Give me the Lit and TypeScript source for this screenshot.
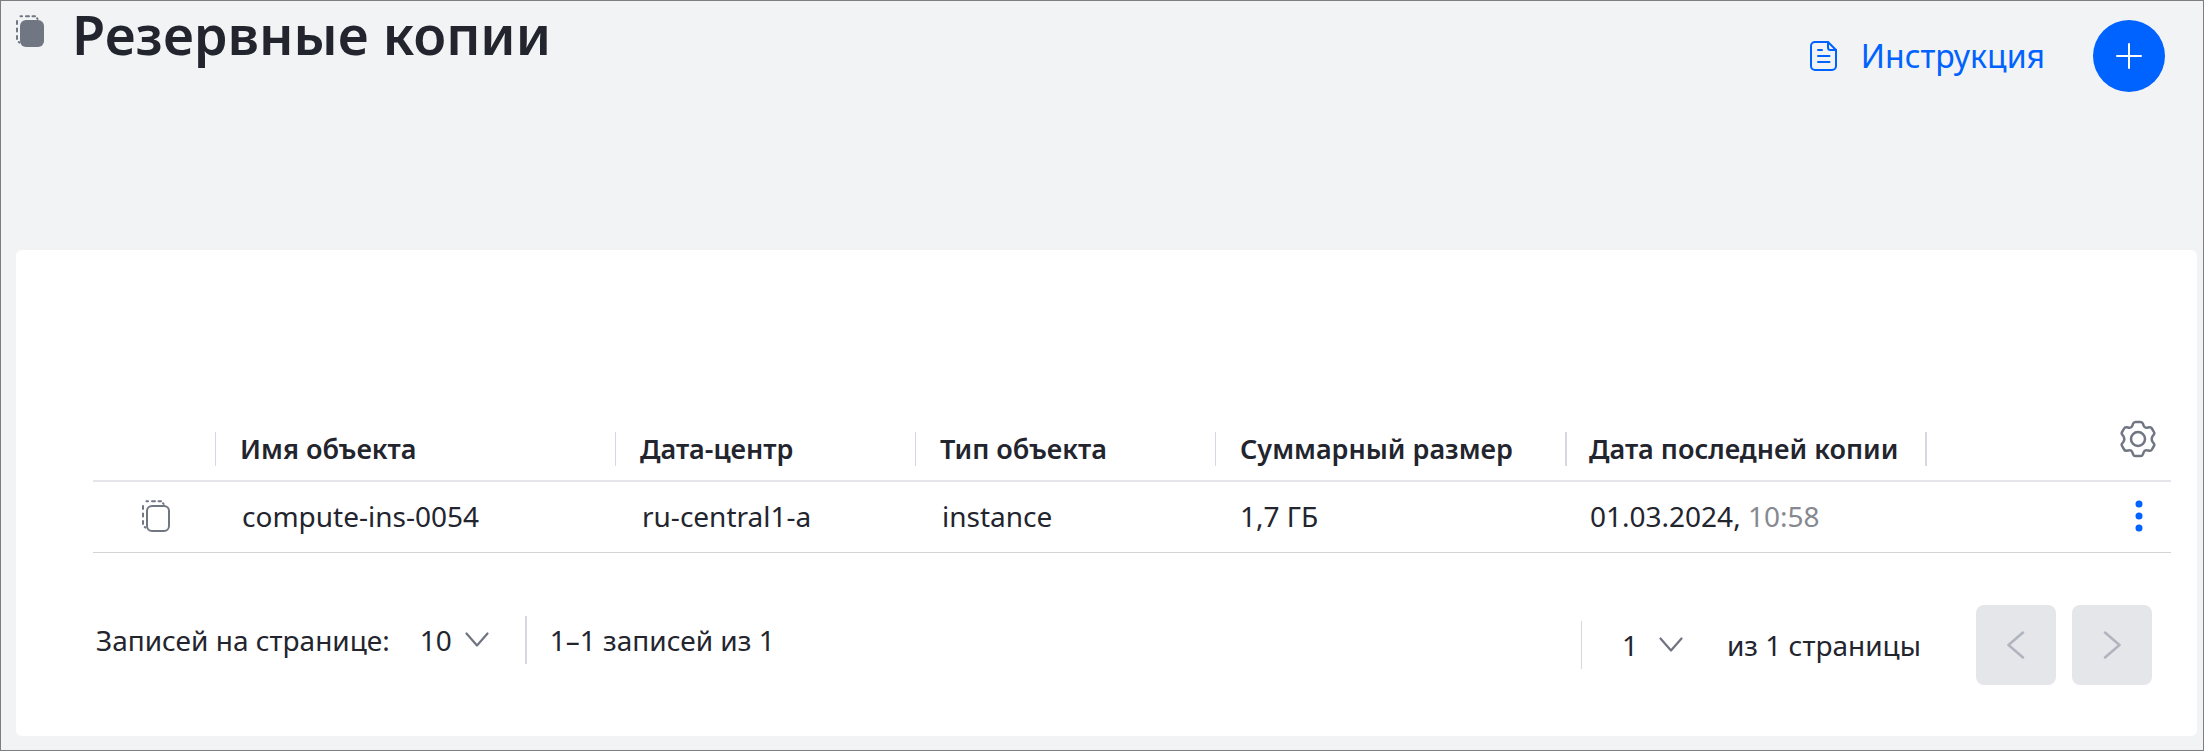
import { LitElement, html, css, svg } from "lit";
import { customElement, property } from "lit/decorators.js";

interface BackupRow {
  name: string;
  zone: string;
  type: string;
  size: string;
  date: string;
  time: string;
}

const ROWS: BackupRow[] = [
  {
    name: "compute-ins-0054",
    zone: "ru-central1-a",
    type: "instance",
    size: "1,7 ГБ",
    date: "01.03.2024,",
    time: "10:58",
  },
];

const copyIcon = (filled: boolean) => html`
  <svg class="copy" viewBox="0 0 28 32" width="28" height="32" aria-hidden="true">
    <g fill="none" stroke="#707682" stroke-width="2" stroke-linecap="round">
      <path d="M4.5 1.2H6M10 1.2h3M16.500 1.2h2.500M1 6v3M1 13.500v3M1 21v3" />
      <path d="M21 3.200l.6.8M2.800 27l.6.6" />
    </g>
    ${filled
      ? svg`<rect x="4" y="5" width="24" height="27" rx="6" fill="#707682" />`
      : svg`<rect x="5" y="6" width="22" height="25" rx="5" fill="#fff" stroke="#707682" stroke-width="2" />`}
  </svg>
`;

const chevronDown = html`
  <svg class="chevron" viewBox="0 0 24 16" width="24" height="16" aria-hidden="true">
    <path d="M1.500 1.500L12 13.500 22.500 1.500" fill="none" stroke="#6f7480" stroke-width="2.200" stroke-linecap="round" stroke-linejoin="round" />
  </svg>
`;

@customElement("app-root")
export class AppRoot extends LitElement {
  @property({ attribute: false }) rows: BackupRow[] = ROWS;

  static styles = css`
    :host {
      display: block;
      font-family: "Noto Sans", sans-serif;
      font-size: 28px;
      line-height: 40px;
      color: #23252e;
    }
    * {
      box-sizing: border-box;
    }
    button,
    select {
      font: inherit;
      color: inherit;
      border: 0;
      margin: 0;
      padding: 0;
      background: none;
      cursor: pointer;
    }
    svg {
      display: block;
      flex: none;
    }
    .page {
      display: flex;
      flex-direction: column;
      min-height: 100vh;
      border: 1px solid #7e7e81;
      background: #f2f3f5;
      padding: 0 6px 14px 15px;
    }
    .header {
      display: flex;
      justify-content: space-between;
      align-items: flex-start;
      padding-right: 32px;
      margin-bottom: 158px;
    }
    .heading {
      display: flex;
      align-items: flex-start;
      gap: 28px;
    }
    .heading .copy {
      margin-top: 14px;
    }
    h1 {
      margin: 0;
      font-size: 54px;
      line-height: 66px;
      font-weight: 600;
    }
    .actions {
      display: flex;
      align-items: center;
      gap: 48px;
      padding-top: 19px;
    }
    .guide {
      display: flex;
      align-items: center;
      gap: 24px;
      font-size: 32px;
      color: #0062ff;
      text-decoration: none;
    }
    .add {
      display: grid;
      place-items: center;
      width: 72px;
      height: 72px;
      border-radius: 50%;
      background: #0062ff;
    }
    .card {
      flex: 1;
      padding: 167px 26px 50px 77px;
      border-radius: 6px;
      background: #fff;
    }
    table {
      width: 100%;
      table-layout: fixed;
      border-collapse: collapse;
    }
    .c-icon {
      width: 122px;
    }
    .c-name {
      width: 400px;
    }
    .c-mid {
      width: 300px;
    }
    .c-size {
      width: 350px;
    }
    .c-date {
      width: 360px;
    }
    th {
      padding: 0 0 14px;
      height: 64px;
      vertical-align: bottom;
      text-align: left;
      font-size: 27px;
      font-weight: 600;
      border-bottom: 2px solid #e5e6ec;
      white-space: nowrap;
    }
    .label {
      padding-left: 24px;
      border-left: 1px solid #d5d8e0;
      line-height: 34px;
    }
    .label.wide {
      padding-left: 22px;
      border-left-width: 2px;
    }
    .last {
      display: flex;
      justify-content: space-between;
      align-items: flex-end;
      height: 34px;
      padding-right: 15px;
    }
    .edge {
      width: 2px;
      height: 34px;
      background: #d5d8e0;
    }
    .settings {
      margin-bottom: 8px;
    }
    td {
      height: 71px;
      padding: 0 0 2px 27px;
      border-bottom: 1px solid #d3d4d8;
      white-space: nowrap;
    }
    td:first-child {
      padding-left: 49px;
    }
    td:nth-child(n + 5) {
      padding-left: 25px;
    }
    .time {
      color: #868990;
    }
    .more {
      display: block;
      margin: 0 28px 0 auto;
    }
    .footer {
      display: flex;
      justify-content: space-between;
      align-items: flex-start;
      padding: 52px 19px 0 3px;
    }
    .group {
      display: flex;
      align-items: center;
      height: 80px;
    }
    .group.start {
      height: 70px;
    }
    .picker {
      display: inline-grid;
      align-items: center;
    }
    .picker > * {
      grid-area: 1 / 1;
    }
    .picker select {
      appearance: none;
      padding-right: 44px;
    }
    .start .picker select {
      padding-right: 36px;
    }
    .picker .chevron {
      justify-self: end;
      pointer-events: none;
    }
    .start .picker {
      margin-left: 30px;
    }
    .rule {
      width: 2px;
      height: 48px;
      margin: 0 23px 0 36px;
      background: #d5d8e0;
    }
    .rule.thin {
      width: 1px;
      margin: 0 40px 0 0;
    }
    .total {
      margin: 0 55px 0 44px;
    }
    .nav {
      display: grid;
      place-items: center;
      width: 80px;
      height: 80px;
      border-radius: 8px;
      background: #e5e6ea;
    }
    .nav + .nav {
      margin-left: 16px;
    }
  `;

  render() {
    return html`
      <main class="page">
        <header class="header">
          <div class="heading">
            ${copyIcon(true)}
            <h1>Резервные копии</h1>
          </div>
          <div class="actions">
            <a class="guide" href="#guide">
              <svg viewBox="0 0 27 30" width="27" height="30" fill="none" stroke="#0062ff" stroke-width="2" stroke-linecap="round" stroke-linejoin="round" aria-hidden="true">
                <path d="M18 1H5a4 4 0 0 0-4 4v20a4 4 0 0 0 4 4h17a4 4 0 0 0 4-4V9z" />
                <path d="M18 1v5.500A2.500 2.500 0 0 0 20.500 9H26M8 9h4M8 15h11.500M8 21h11.500" />
              </svg>
              Инструкция
            </a>
            <button class="add" type="button" aria-label="Создать">
              <svg viewBox="0 0 26 26" width="26" height="26" aria-hidden="true">
                <path d="M13 1v24M1 13h24" stroke="#fff" stroke-width="2" stroke-linecap="round" />
              </svg>
            </button>
          </div>
        </header>

        <section class="card">
          <table>
            <colgroup>
              <col class="c-icon" />
              <col class="c-name" />
              <col class="c-mid" />
              <col class="c-mid" />
              <col class="c-size" />
              <col class="c-date" />
              <col />
            </colgroup>
            <thead>
              <tr>
                <th></th>
                <th><div class="label">Имя объекта</div></th>
                <th><div class="label">Дата-центр</div></th>
                <th><div class="label">Тип объекта</div></th>
                <th><div class="label">Суммарный размер</div></th>
                <th><div class="label wide">Дата последней копии</div></th>
                <th>
                  <div class="last">
                    <span class="edge"></span>
                    <button class="settings" type="button" aria-label="Настройка столбцов">
                      <svg viewBox="0 0 36 38" width="36" height="38" fill="none" stroke="#707682" stroke-width="2.500" stroke-linejoin="round" aria-hidden="true">
                        <path d="M15.500 2h5q1.800 0 2.400 1.700l.7 2q.9 2.500 3.400 2l2.300-.4q1.700-.3 2.600 1.200l2 3.500q.9 1.500-.2 2.800l-1.200 1.500q-1.600 2.700 0 5.400l1.200 1.500q1.100 1.300.2 2.800l-2 3.500q-.9 1.500-2.600 1.200l-2.300-.4q-2.500-.5-3.400 2l-.7 2q-.6 1.700-2.400 1.700h-5q-1.800 0-2.400-1.700l-.7-2q-.9-2.500-3.400-2l-2.300.4q-1.700.3-2.600-1.200l-2-3.500q-.9-1.500.2-2.800l1.200-1.500q1.600-2.700 0-5.400l-1.200-1.500q-1.100-1.300-.2-2.800l2-3.500q.9-1.500 2.600-1.200l2.300.4q2.500.5 3.400-2l.7-2q.6-1.700 2.400-1.700z" />
                        <circle cx="18" cy="19" r="7" />
                      </svg>
                    </button>
                  </div>
                </th>
              </tr>
            </thead>
            <tbody>
              ${this.rows.map(
                (row) => html`
                  <tr>
                    <td>${copyIcon(false)}</td>
                    <td>${row.name}</td>
                    <td>${row.zone}</td>
                    <td>${row.type}</td>
                    <td>${row.size}</td>
                    <td>${row.date} <span class="time">${row.time}</span></td>
                    <td>
                      <button class="more" type="button" aria-label="Действия">
                        <svg viewBox="0 0 8 32" width="8" height="32" fill="#0062ff" aria-hidden="true">
                          <circle cx="4" cy="4" r="3.500" />
                          <circle cx="4" cy="16" r="3.500" />
                          <circle cx="4" cy="28" r="3.500" />
                        </svg>
                      </button>
                    </td>
                  </tr>
                `
              )}
            </tbody>
          </table>

          <footer class="footer">
            <div class="group start">
              <label for="page-size">Записей на странице:</label>
              <span class="picker">
                <select id="page-size">
                  <option>10</option>
                </select>
                ${chevronDown}
              </span>
              <span class="rule"></span>
              <span>1–1 записей из 1</span>
            </div>
            <div class="group">
              <span class="rule thin"></span>
              <span class="picker">
                <select id="page-number" aria-labelledby="page-total">
                  <option>1</option>
                </select>
                ${chevronDown}
              </span>
              <label class="total" id="page-total" for="page-number">из 1 страницы</label>
              <button class="nav" type="button" aria-label="Предыдущая страница">
                <svg viewBox="0 0 18 28" width="18" height="28" aria-hidden="true">
                  <path d="M16 1.500L1.500 14 16 26.500" fill="none" stroke="#b0b4be" stroke-width="2.500" stroke-linecap="round" stroke-linejoin="round" />
                </svg>
              </button>
              <button class="nav" type="button" aria-label="Следующая страница">
                <svg viewBox="0 0 18 28" width="18" height="28" aria-hidden="true">
                  <path d="M2 1.500L16.500 14 2 26.500" fill="none" stroke="#b0b4be" stroke-width="2.500" stroke-linecap="round" stroke-linejoin="round" />
                </svg>
              </button>
            </div>
          </footer>
        </section>
      </main>
    `;
  }
}
